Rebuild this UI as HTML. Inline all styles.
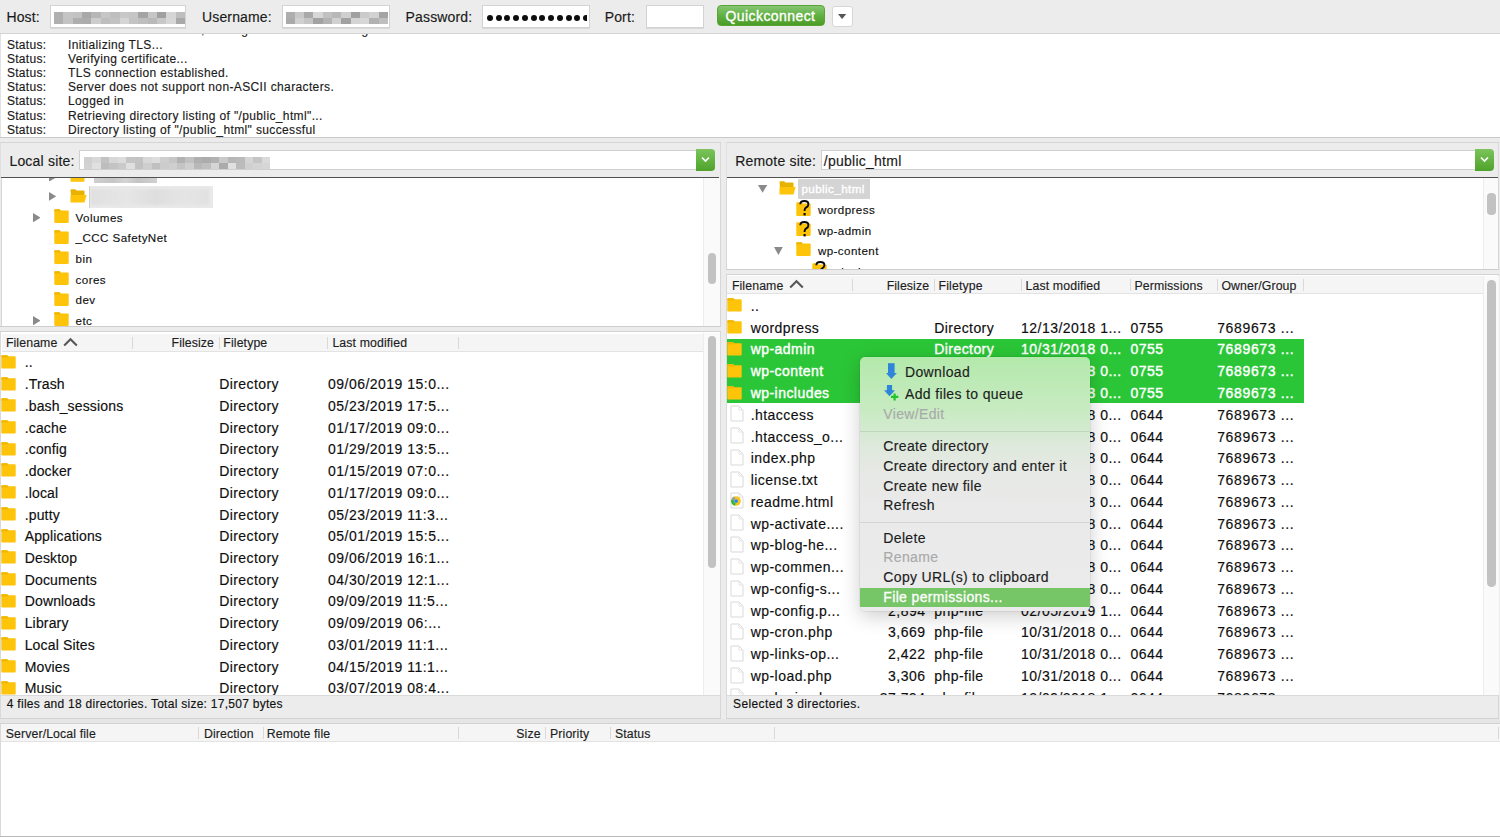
<!DOCTYPE html><html><head><meta charset="utf-8"><style>
*{margin:0;padding:0;box-sizing:border-box}
html,body{width:1500px;height:837px;overflow:hidden;background:#ececec;font-family:"Liberation Sans",sans-serif;position:relative}
.t{position:absolute;white-space:pre;-webkit-text-stroke:0.15px currentColor}
.b{position:absolute}
</style></head><body>
<div class="b" style="left:0.00px;top:0.00px;width:1500.00px;height:33.50px;background:#ececec"></div>
<div class="b" style="left:0.00px;top:33.00px;width:1500.00px;height:1.00px;background:#d4d4d4"></div>
<div class="t " style="left:6.40px;top:9.55px;font-size:14px;line-height:14px;color:#1a1a1a;letter-spacing:0.15px;">Host:</div>
<div class="b" style="left:50.40px;top:4.80px;width:136.00px;height:23.00px;background:#fff;border:1px solid #d3d3d3;box-shadow:0 0.5px 0.5px rgba(0,0,0,0.08)"></div>
<div class="t " style="left:202.00px;top:9.55px;font-size:14px;line-height:14px;color:#1a1a1a;letter-spacing:0.15px;">Username:</div>
<div class="b" style="left:282.40px;top:4.80px;width:108.00px;height:23.00px;background:#fff;border:1px solid #d3d3d3;box-shadow:0 0.5px 0.5px rgba(0,0,0,0.08)"></div>
<div class="t " style="left:405.60px;top:9.55px;font-size:14px;line-height:14px;color:#1a1a1a;letter-spacing:0.15px;">Password:</div>
<div class="b" style="left:481.50px;top:4.80px;width:108.00px;height:23.00px;background:#fff;border:1px solid #d3d3d3;box-shadow:0 0.5px 0.5px rgba(0,0,0,0.08)"></div>
<div class="t " style="left:604.70px;top:9.55px;font-size:14px;line-height:14px;color:#1a1a1a;letter-spacing:0.15px;">Port:</div>
<div class="b" style="left:646.00px;top:4.80px;width:58.00px;height:23.00px;background:#fff;border:1px solid #d3d3d3;box-shadow:0 0.5px 0.5px rgba(0,0,0,0.08)"></div>
<div class="b" style="left:54.00px;top:12.00px;width:9.66px;height:6.30px;background:rgb(175,175,175)"></div>
<div class="b" style="left:63.36px;top:12.00px;width:9.66px;height:6.30px;background:rgb(197,197,197)"></div>
<div class="b" style="left:72.71px;top:12.00px;width:9.66px;height:6.30px;background:rgb(194,194,194)"></div>
<div class="b" style="left:82.07px;top:12.00px;width:9.66px;height:6.30px;background:rgb(168,168,168)"></div>
<div class="b" style="left:91.43px;top:12.00px;width:9.66px;height:6.30px;background:rgb(183,183,183)"></div>
<div class="b" style="left:100.79px;top:12.00px;width:9.66px;height:6.30px;background:rgb(198,198,198)"></div>
<div class="b" style="left:110.14px;top:12.00px;width:9.66px;height:6.30px;background:rgb(190,190,190)"></div>
<div class="b" style="left:119.50px;top:12.00px;width:9.66px;height:6.30px;background:rgb(200,200,200)"></div>
<div class="b" style="left:128.86px;top:12.00px;width:9.66px;height:6.30px;background:rgb(197,197,197)"></div>
<div class="b" style="left:138.21px;top:12.00px;width:9.66px;height:6.30px;background:rgb(164,164,164)"></div>
<div class="b" style="left:147.57px;top:12.00px;width:9.66px;height:6.30px;background:rgb(198,198,198)"></div>
<div class="b" style="left:156.93px;top:12.00px;width:9.66px;height:6.30px;background:rgb(160,160,160)"></div>
<div class="b" style="left:166.29px;top:12.00px;width:9.66px;height:6.30px;background:rgb(213,213,213)"></div>
<div class="b" style="left:175.64px;top:12.00px;width:9.66px;height:6.30px;background:rgb(190,190,190)"></div>
<div class="b" style="left:54.00px;top:18.00px;width:9.66px;height:6.30px;background:rgb(176,176,176)"></div>
<div class="b" style="left:63.36px;top:18.00px;width:9.66px;height:6.30px;background:rgb(195,195,195)"></div>
<div class="b" style="left:72.71px;top:18.00px;width:9.66px;height:6.30px;background:rgb(174,174,174)"></div>
<div class="b" style="left:82.07px;top:18.00px;width:9.66px;height:6.30px;background:rgb(172,172,172)"></div>
<div class="b" style="left:91.43px;top:18.00px;width:9.66px;height:6.30px;background:rgb(205,205,205)"></div>
<div class="b" style="left:100.79px;top:18.00px;width:9.66px;height:6.30px;background:rgb(190,190,190)"></div>
<div class="b" style="left:110.14px;top:18.00px;width:9.66px;height:6.30px;background:rgb(194,194,194)"></div>
<div class="b" style="left:119.50px;top:18.00px;width:9.66px;height:6.30px;background:rgb(213,213,213)"></div>
<div class="b" style="left:128.86px;top:18.00px;width:9.66px;height:6.30px;background:rgb(195,195,195)"></div>
<div class="b" style="left:138.21px;top:18.00px;width:9.66px;height:6.30px;background:rgb(190,190,190)"></div>
<div class="b" style="left:147.57px;top:18.00px;width:9.66px;height:6.30px;background:rgb(185,185,185)"></div>
<div class="b" style="left:156.93px;top:18.00px;width:9.66px;height:6.30px;background:rgb(200,200,200)"></div>
<div class="b" style="left:166.29px;top:18.00px;width:9.66px;height:6.30px;background:rgb(215,215,215)"></div>
<div class="b" style="left:175.64px;top:18.00px;width:9.66px;height:6.30px;background:rgb(169,169,169)"></div>
<div class="b" style="left:285.50px;top:12.00px;width:9.62px;height:6.30px;background:rgb(174,174,174)"></div>
<div class="b" style="left:294.82px;top:12.00px;width:9.62px;height:6.30px;background:rgb(200,200,200)"></div>
<div class="b" style="left:304.14px;top:12.00px;width:9.62px;height:6.30px;background:rgb(169,169,169)"></div>
<div class="b" style="left:313.45px;top:12.00px;width:9.62px;height:6.30px;background:rgb(215,215,215)"></div>
<div class="b" style="left:322.77px;top:12.00px;width:9.62px;height:6.30px;background:rgb(193,193,193)"></div>
<div class="b" style="left:332.09px;top:12.00px;width:9.62px;height:6.30px;background:rgb(184,184,184)"></div>
<div class="b" style="left:341.41px;top:12.00px;width:9.62px;height:6.30px;background:rgb(207,207,207)"></div>
<div class="b" style="left:350.73px;top:12.00px;width:9.62px;height:6.30px;background:rgb(160,160,160)"></div>
<div class="b" style="left:360.05px;top:12.00px;width:9.62px;height:6.30px;background:rgb(202,202,202)"></div>
<div class="b" style="left:369.36px;top:12.00px;width:9.62px;height:6.30px;background:rgb(209,209,209)"></div>
<div class="b" style="left:378.68px;top:12.00px;width:9.62px;height:6.30px;background:rgb(164,164,164)"></div>
<div class="b" style="left:285.50px;top:18.00px;width:9.62px;height:6.30px;background:rgb(170,170,170)"></div>
<div class="b" style="left:294.82px;top:18.00px;width:9.62px;height:6.30px;background:rgb(208,208,208)"></div>
<div class="b" style="left:304.14px;top:18.00px;width:9.62px;height:6.30px;background:rgb(197,197,197)"></div>
<div class="b" style="left:313.45px;top:18.00px;width:9.62px;height:6.30px;background:rgb(162,162,162)"></div>
<div class="b" style="left:322.77px;top:18.00px;width:9.62px;height:6.30px;background:rgb(179,179,179)"></div>
<div class="b" style="left:332.09px;top:18.00px;width:9.62px;height:6.30px;background:rgb(209,209,209)"></div>
<div class="b" style="left:341.41px;top:18.00px;width:9.62px;height:6.30px;background:rgb(161,161,161)"></div>
<div class="b" style="left:350.73px;top:18.00px;width:9.62px;height:6.30px;background:rgb(212,212,212)"></div>
<div class="b" style="left:360.05px;top:18.00px;width:9.62px;height:6.30px;background:rgb(215,215,215)"></div>
<div class="b" style="left:369.36px;top:18.00px;width:9.62px;height:6.30px;background:rgb(177,177,177)"></div>
<div class="b" style="left:378.68px;top:18.00px;width:9.62px;height:6.30px;background:rgb(190,190,190)"></div>
<div class="b" style="left:486.8px;top:14.8px;width:100.6px;height:7px;overflow:hidden;white-space:nowrap;line-height:0"><span style="display:inline-block;width:6px;height:6px;border-radius:50%;background:#0d0d0d;margin-right:2.77px"></span><span style="display:inline-block;width:6px;height:6px;border-radius:50%;background:#0d0d0d;margin-right:2.77px"></span><span style="display:inline-block;width:6px;height:6px;border-radius:50%;background:#0d0d0d;margin-right:2.77px"></span><span style="display:inline-block;width:6px;height:6px;border-radius:50%;background:#0d0d0d;margin-right:2.77px"></span><span style="display:inline-block;width:6px;height:6px;border-radius:50%;background:#0d0d0d;margin-right:2.77px"></span><span style="display:inline-block;width:6px;height:6px;border-radius:50%;background:#0d0d0d;margin-right:2.77px"></span><span style="display:inline-block;width:6px;height:6px;border-radius:50%;background:#0d0d0d;margin-right:2.77px"></span><span style="display:inline-block;width:6px;height:6px;border-radius:50%;background:#0d0d0d;margin-right:2.77px"></span><span style="display:inline-block;width:6px;height:6px;border-radius:50%;background:#0d0d0d;margin-right:2.77px"></span><span style="display:inline-block;width:6px;height:6px;border-radius:50%;background:#0d0d0d;margin-right:2.77px"></span><span style="display:inline-block;width:6px;height:6px;border-radius:50%;background:#0d0d0d;margin-right:2.77px"></span><span style="display:inline-block;width:6px;height:6px;border-radius:50%;background:#0d0d0d;margin-right:2.77px"></span><span style="display:inline-block;width:6px;height:6px;border-radius:50%;background:#0d0d0d;margin-right:2.77px"></span><span style="display:inline-block;width:6px;height:6px;border-radius:50%;background:#0d0d0d;margin-right:2.77px"></span></div>
<div class="b" style="left:716.70px;top:4.80px;width:108.00px;height:21.60px;background:linear-gradient(#86c672,#62b043 50%,#4b9c24);border-radius:4px;border:0.5px solid #58a436"></div>
<div class="t " style="left:725.50px;top:8.75px;font-size:14px;line-height:14px;color:#fff;letter-spacing:0.42px;-webkit-text-stroke:0.35px #fff;">Quickconnect</div>
<div class="b" style="left:832.00px;top:5.80px;width:20.50px;height:21.00px;background:#fff;border:1px solid #d6d6d6;border-radius:3px"></div>
<div class="b" style="left:838.40px;top:14.20px;line-height:0"><svg width="8.20" height="5.00" viewBox="0 0 8.20 5.00" style="display:block"><path d="M0 0 L8.20 0 L4.10 5.00 Z" fill="#555"/></svg></div>
<div class="b" style="left:0.00px;top:34.00px;width:1500.00px;height:103.00px;background:#fff;border-left:1px solid #e2e2e2"></div>
<div class="b" style="left:0.00px;top:136.50px;width:1500.00px;height:1.00px;background:#c9c9c9"></div>
<div class="b" style="left:0;top:34px;width:1500px;height:102.6px;overflow:hidden">
<div class="t" style="left:6.9px;top:-9.66px;font-size:12px;line-height:12px;color:#1a1a1a;letter-spacing:0.3px">Status:</div>
<div class="t" style="left:68px;top:-9.66px;font-size:12px;line-height:12px;color:#1a1a1a;letter-spacing:0.37px">Connection established, waiting for welcome message...</div>
<div class="t" style="left:6.9px;top:4.54px;font-size:12px;line-height:12px;color:#1a1a1a;letter-spacing:0.3px">Status:</div>
<div class="t" style="left:68px;top:4.54px;font-size:12px;line-height:12px;color:#1a1a1a;letter-spacing:0.37px">Initializing TLS...</div>
<div class="t" style="left:6.9px;top:18.74px;font-size:12px;line-height:12px;color:#1a1a1a;letter-spacing:0.3px">Status:</div>
<div class="t" style="left:68px;top:18.74px;font-size:12px;line-height:12px;color:#1a1a1a;letter-spacing:0.37px">Verifying certificate...</div>
<div class="t" style="left:6.9px;top:32.94px;font-size:12px;line-height:12px;color:#1a1a1a;letter-spacing:0.3px">Status:</div>
<div class="t" style="left:68px;top:32.94px;font-size:12px;line-height:12px;color:#1a1a1a;letter-spacing:0.37px">TLS connection established.</div>
<div class="t" style="left:6.9px;top:47.14px;font-size:12px;line-height:12px;color:#1a1a1a;letter-spacing:0.3px">Status:</div>
<div class="t" style="left:68px;top:47.14px;font-size:12px;line-height:12px;color:#1a1a1a;letter-spacing:0.37px">Server does not support non-ASCII characters.</div>
<div class="t" style="left:6.9px;top:61.34px;font-size:12px;line-height:12px;color:#1a1a1a;letter-spacing:0.3px">Status:</div>
<div class="t" style="left:68px;top:61.34px;font-size:12px;line-height:12px;color:#1a1a1a;letter-spacing:0.37px">Logged in</div>
<div class="t" style="left:6.9px;top:75.54px;font-size:12px;line-height:12px;color:#1a1a1a;letter-spacing:0.3px">Status:</div>
<div class="t" style="left:68px;top:75.54px;font-size:12px;line-height:12px;color:#1a1a1a;letter-spacing:0.37px">Retrieving directory listing of &quot;/public_html&quot;...</div>
<div class="t" style="left:6.9px;top:89.74px;font-size:12px;line-height:12px;color:#1a1a1a;letter-spacing:0.3px">Status:</div>
<div class="t" style="left:68px;top:89.74px;font-size:12px;line-height:12px;color:#1a1a1a;letter-spacing:0.37px">Directory listing of &quot;/public_html&quot; successful</div>
</div>
<div class="b" style="left:0.00px;top:141.50px;width:721.00px;height:36.00px;background:#ececec;border-top:1px solid #d5d5d5;border-left:1px solid #e0e0e0;border-right:1px solid #dadada"></div>
<div class="b" style="left:726.00px;top:141.50px;width:773.00px;height:36.00px;background:#ececec;border-top:1px solid #d5d5d5;border-left:1px solid #e0e0e0;border-right:1px solid #dadada"></div>
<div class="b" style="left:1.00px;top:176.90px;width:718.20px;height:1.40px;background:#505050"></div>
<div class="b" style="left:727.30px;top:176.90px;width:771.00px;height:1.40px;background:#505050"></div>
<div class="t " style="left:9.40px;top:154.45px;font-size:14px;line-height:14px;color:#1a1a1a;letter-spacing:0.2px;">Local site:</div>
<div class="b" style="left:79.20px;top:149.60px;width:636.00px;height:20.80px;background:#fff;border:1px solid #d0d0d0"></div>
<div class="b" style="left:84.00px;top:156.50px;width:8.75px;height:6.45px;background:rgb(208,208,208)"></div>
<div class="b" style="left:92.45px;top:156.50px;width:8.75px;height:6.45px;background:rgb(216,216,216)"></div>
<div class="b" style="left:100.91px;top:156.50px;width:8.75px;height:6.45px;background:rgb(194,194,194)"></div>
<div class="b" style="left:109.36px;top:156.50px;width:8.75px;height:6.45px;background:rgb(215,215,215)"></div>
<div class="b" style="left:117.82px;top:156.50px;width:8.75px;height:6.45px;background:rgb(220,220,220)"></div>
<div class="b" style="left:126.27px;top:156.50px;width:8.75px;height:6.45px;background:rgb(197,197,197)"></div>
<div class="b" style="left:134.73px;top:156.50px;width:8.75px;height:6.45px;background:rgb(195,195,195)"></div>
<div class="b" style="left:143.18px;top:156.50px;width:8.75px;height:6.45px;background:rgb(216,216,216)"></div>
<div class="b" style="left:151.64px;top:156.50px;width:8.75px;height:6.45px;background:rgb(221,221,221)"></div>
<div class="b" style="left:160.09px;top:156.50px;width:8.75px;height:6.45px;background:rgb(206,206,206)"></div>
<div class="b" style="left:168.55px;top:156.50px;width:8.75px;height:6.45px;background:rgb(198,198,198)"></div>
<div class="b" style="left:177.00px;top:156.50px;width:8.75px;height:6.45px;background:rgb(178,178,178)"></div>
<div class="b" style="left:185.45px;top:156.50px;width:8.75px;height:6.45px;background:rgb(193,193,193)"></div>
<div class="b" style="left:193.91px;top:156.50px;width:8.75px;height:6.45px;background:rgb(176,176,176)"></div>
<div class="b" style="left:202.36px;top:156.50px;width:8.75px;height:6.45px;background:rgb(172,172,172)"></div>
<div class="b" style="left:210.82px;top:156.50px;width:8.75px;height:6.45px;background:rgb(178,178,178)"></div>
<div class="b" style="left:219.27px;top:156.50px;width:8.75px;height:6.45px;background:rgb(201,201,201)"></div>
<div class="b" style="left:227.73px;top:156.50px;width:8.75px;height:6.45px;background:rgb(183,183,183)"></div>
<div class="b" style="left:236.18px;top:156.50px;width:8.75px;height:6.45px;background:rgb(186,186,186)"></div>
<div class="b" style="left:244.64px;top:156.50px;width:8.75px;height:6.45px;background:rgb(213,213,213)"></div>
<div class="b" style="left:253.09px;top:156.50px;width:8.75px;height:6.45px;background:rgb(197,197,197)"></div>
<div class="b" style="left:261.55px;top:156.50px;width:8.75px;height:6.45px;background:rgb(219,219,219)"></div>
<div class="b" style="left:84.00px;top:162.65px;width:8.75px;height:6.45px;background:rgb(210,210,210)"></div>
<div class="b" style="left:92.45px;top:162.65px;width:8.75px;height:6.45px;background:rgb(224,224,224)"></div>
<div class="b" style="left:100.91px;top:162.65px;width:8.75px;height:6.45px;background:rgb(189,189,189)"></div>
<div class="b" style="left:109.36px;top:162.65px;width:8.75px;height:6.45px;background:rgb(196,196,196)"></div>
<div class="b" style="left:117.82px;top:162.65px;width:8.75px;height:6.45px;background:rgb(202,202,202)"></div>
<div class="b" style="left:126.27px;top:162.65px;width:8.75px;height:6.45px;background:rgb(223,223,223)"></div>
<div class="b" style="left:134.73px;top:162.65px;width:8.75px;height:6.45px;background:rgb(194,194,194)"></div>
<div class="b" style="left:143.18px;top:162.65px;width:8.75px;height:6.45px;background:rgb(206,206,206)"></div>
<div class="b" style="left:151.64px;top:162.65px;width:8.75px;height:6.45px;background:rgb(192,192,192)"></div>
<div class="b" style="left:160.09px;top:162.65px;width:8.75px;height:6.45px;background:rgb(204,204,204)"></div>
<div class="b" style="left:168.55px;top:162.65px;width:8.75px;height:6.45px;background:rgb(207,207,207)"></div>
<div class="b" style="left:177.00px;top:162.65px;width:8.75px;height:6.45px;background:rgb(196,196,196)"></div>
<div class="b" style="left:185.45px;top:162.65px;width:8.75px;height:6.45px;background:rgb(207,207,207)"></div>
<div class="b" style="left:193.91px;top:162.65px;width:8.75px;height:6.45px;background:rgb(184,184,184)"></div>
<div class="b" style="left:202.36px;top:162.65px;width:8.75px;height:6.45px;background:rgb(191,191,191)"></div>
<div class="b" style="left:210.82px;top:162.65px;width:8.75px;height:6.45px;background:rgb(213,213,213)"></div>
<div class="b" style="left:219.27px;top:162.65px;width:8.75px;height:6.45px;background:rgb(171,171,171)"></div>
<div class="b" style="left:227.73px;top:162.65px;width:8.75px;height:6.45px;background:rgb(224,224,224)"></div>
<div class="b" style="left:236.18px;top:162.65px;width:8.75px;height:6.45px;background:rgb(187,187,187)"></div>
<div class="b" style="left:244.64px;top:162.65px;width:8.75px;height:6.45px;background:rgb(208,208,208)"></div>
<div class="b" style="left:253.09px;top:162.65px;width:8.75px;height:6.45px;background:rgb(212,212,212)"></div>
<div class="b" style="left:261.55px;top:162.65px;width:8.75px;height:6.45px;background:rgb(214,214,214)"></div>
<div class="b" style="left:695.80px;top:149.00px;width:19.00px;height:21.80px;background:linear-gradient(#7bc45b,#4ea32a);border-radius:0 4px 4px 0"></div>
<div class="b" style="left:700.8px;top:155.5px;line-height:0"><svg width="9" height="7" viewBox="0 0 9 7"><path d="M1 1.5 L4.5 5 L8 1.5" fill="none" stroke="#fff" stroke-width="1.7"/></svg></div>
<div class="t " style="left:735.20px;top:154.45px;font-size:14px;line-height:14px;color:#1a1a1a;letter-spacing:0.2px;">Remote site:</div>
<div class="b" style="left:820.50px;top:149.60px;width:655.00px;height:20.80px;background:#fff;border:1px solid #d0d0d0"></div>
<div class="t " style="left:823.80px;top:153.95px;font-size:14px;line-height:14px;color:#1a1a1a;letter-spacing:0.25px;">/public_html</div>
<div class="b" style="left:1474.80px;top:149.00px;width:19.00px;height:21.80px;background:linear-gradient(#7bc45b,#4ea32a);border-radius:0 4px 4px 0"></div>
<div class="b" style="left:1479.8px;top:155.5px;line-height:0"><svg width="9" height="7" viewBox="0 0 9 7"><path d="M1 1.5 L4.5 5 L8 1.5" fill="none" stroke="#fff" stroke-width="1.7"/></svg></div>
<div class="b" style="left:0.50px;top:178.30px;width:720.00px;height:148.00px;background:#fff;border-left:1px solid #d6d6d6;border-right:1px solid #d6d6d6"></div>
<div class="b" style="left:703.30px;top:178.30px;width:17.00px;height:148.00px;background:#fafafa;border-left:1px solid #ececec"></div>
<div class="b" style="left:707.70px;top:253.00px;width:8.50px;height:30.50px;background:#c2c2c2;border-radius:4px"></div>
<div class="b" style="left:0.00px;top:326.00px;width:721.00px;height:1.00px;background:#cdcdcd"></div>
<div class="b" style="left:0;top:178.3px;width:703px;height:147.7px;overflow:hidden">
<div class="b" style="left:70.00px;top:-9.80px;line-height:0"><svg width="15" height="13" viewBox="0 0 15 13"><path d="M0.5 1.2 Q0.5 0.3 1.4 0.3 L5.2 0.3 L6.4 1.6 L13.6 1.6 Q14.5 1.6 14.5 2.5 L14.5 12 Q14.5 12.8 13.6 12.8 L1.4 12.8 Q0.5 12.8 0.5 12 Z" fill="#fec40a"/><path d="M0.5 2.6 L14.5 2.6" stroke="#e9b000" stroke-width="0.8"/></svg></div>
<div class="b" style="left:49.00px;top:-5.80px;line-height:0"><svg width="7.30" height="8.70" viewBox="0 0 7.30 8.70" style="display:block"><path d="M0 0 L7.30 4.35 L0 8.70 Z" fill="#8a8a8a"/></svg></div>
<div class="b" style="left:94.00px;top:-0.70px;width:63.00px;height:5.20px;background:linear-gradient(90deg,#cfcfcf,#c6c6c6 30%,#d4d4d4 50%,#c4c4c4 70%,#d0d0d0);filter:blur(0.6px)"></div>
<div class="b" style="left:49.00px;top:13.70px;line-height:0"><svg width="7.30" height="8.70" viewBox="0 0 7.30 8.70" style="display:block"><path d="M0 0 L7.30 4.35 L0 8.70 Z" fill="#8a8a8a"/></svg></div>
<div class="b" style="left:70.00px;top:10.40px;line-height:0"><svg width="17" height="14" viewBox="0 0 17 14"><path d="M0.5 1.2 Q0.5 0.3 1.4 0.3 L5.2 0.3 L6.4 1.6 L13.6 1.6 Q14.5 1.6 14.5 2.5 L14.5 6 L1 6 Z" fill="#e8b300"/><path d="M2.2 6 L16.6 6 L14.5 13.6 L0.5 13.6 L0.5 6 Z" fill="#fec40a"/></svg></div>
<div class="b" style="left:88.70px;top:7.70px;width:124.00px;height:22.00px;background:#e9e9e9"></div>
<div class="b" style="left:88.70px;top:7.70px;width:1.00px;height:22.00px;background:#cfcfcf"></div>
<div class="b" style="left:91.00px;top:10.70px;width:118.00px;height:16.00px;background:linear-gradient(90deg,#e0e0e0,#e6e6e6 30%,#dedede 55%,#e5e5e5 80%,#e1e1e1);filter:blur(1.2px)"></div>
<div class="b" style="left:32.70px;top:34.40px;line-height:0"><svg width="7.60" height="9.30" viewBox="0 0 7.60 9.30" style="display:block"><path d="M0 0 L7.60 4.65 L0 9.30 Z" fill="#8a8a8a"/></svg></div>
<div class="b" style="left:53.50px;top:30.60px;line-height:0"><svg width="15" height="14" viewBox="0 0 15 14"><path d="M0.3 1.0 Q0.3 0.2 1.1 0.2 L5.6 0.2 L6.6 1.4 L13.9 1.4 Q14.7 1.4 14.7 2.2 L14.7 13.1 Q14.7 13.9 13.9 13.9 L1.1 13.9 Q0.3 13.9 0.3 13.1 Z" fill="#fec40a"/><path d="M0.3 1.0 Q0.3 0.2 1.1 0.2 L5.6 0.2 L6.6 1.4 L6.6 2.6 L0.3 2.6 Z" fill="#efb600"/></svg></div>
<div class="t " style="left:75.60px;top:33.38px;font-size:11.6px;line-height:11.6px;color:#111;letter-spacing:0.42px;">Volumes</div>
<div class="b" style="left:53.50px;top:51.30px;line-height:0"><svg width="15" height="14" viewBox="0 0 15 14"><path d="M0.3 1.0 Q0.3 0.2 1.1 0.2 L5.6 0.2 L6.6 1.4 L13.9 1.4 Q14.7 1.4 14.7 2.2 L14.7 13.1 Q14.7 13.9 13.9 13.9 L1.1 13.9 Q0.3 13.9 0.3 13.1 Z" fill="#fec40a"/><path d="M0.3 1.0 Q0.3 0.2 1.1 0.2 L5.6 0.2 L6.6 1.4 L6.6 2.6 L0.3 2.6 Z" fill="#efb600"/></svg></div>
<div class="t " style="left:75.60px;top:54.08px;font-size:11.6px;line-height:11.6px;color:#111;letter-spacing:0.42px;">_CCC SafetyNet</div>
<div class="b" style="left:53.50px;top:72.00px;line-height:0"><svg width="15" height="14" viewBox="0 0 15 14"><path d="M0.3 1.0 Q0.3 0.2 1.1 0.2 L5.6 0.2 L6.6 1.4 L13.9 1.4 Q14.7 1.4 14.7 2.2 L14.7 13.1 Q14.7 13.9 13.9 13.9 L1.1 13.9 Q0.3 13.9 0.3 13.1 Z" fill="#fec40a"/><path d="M0.3 1.0 Q0.3 0.2 1.1 0.2 L5.6 0.2 L6.6 1.4 L6.6 2.6 L0.3 2.6 Z" fill="#efb600"/></svg></div>
<div class="t " style="left:75.60px;top:74.78px;font-size:11.6px;line-height:11.6px;color:#111;letter-spacing:0.42px;">bin</div>
<div class="b" style="left:53.50px;top:92.60px;line-height:0"><svg width="15" height="14" viewBox="0 0 15 14"><path d="M0.3 1.0 Q0.3 0.2 1.1 0.2 L5.6 0.2 L6.6 1.4 L13.9 1.4 Q14.7 1.4 14.7 2.2 L14.7 13.1 Q14.7 13.9 13.9 13.9 L1.1 13.9 Q0.3 13.9 0.3 13.1 Z" fill="#fec40a"/><path d="M0.3 1.0 Q0.3 0.2 1.1 0.2 L5.6 0.2 L6.6 1.4 L6.6 2.6 L0.3 2.6 Z" fill="#efb600"/></svg></div>
<div class="t " style="left:75.60px;top:95.38px;font-size:11.6px;line-height:11.6px;color:#111;letter-spacing:0.42px;">cores</div>
<div class="b" style="left:53.50px;top:113.30px;line-height:0"><svg width="15" height="14" viewBox="0 0 15 14"><path d="M0.3 1.0 Q0.3 0.2 1.1 0.2 L5.6 0.2 L6.6 1.4 L13.9 1.4 Q14.7 1.4 14.7 2.2 L14.7 13.1 Q14.7 13.9 13.9 13.9 L1.1 13.9 Q0.3 13.9 0.3 13.1 Z" fill="#fec40a"/><path d="M0.3 1.0 Q0.3 0.2 1.1 0.2 L5.6 0.2 L6.6 1.4 L6.6 2.6 L0.3 2.6 Z" fill="#efb600"/></svg></div>
<div class="t " style="left:75.60px;top:116.08px;font-size:11.6px;line-height:11.6px;color:#111;letter-spacing:0.42px;">dev</div>
<div class="b" style="left:32.70px;top:137.70px;line-height:0"><svg width="7.60" height="9.30" viewBox="0 0 7.60 9.30" style="display:block"><path d="M0 0 L7.60 4.65 L0 9.30 Z" fill="#8a8a8a"/></svg></div>
<div class="b" style="left:53.50px;top:133.90px;line-height:0"><svg width="15" height="14" viewBox="0 0 15 14"><path d="M0.3 1.0 Q0.3 0.2 1.1 0.2 L5.6 0.2 L6.6 1.4 L13.9 1.4 Q14.7 1.4 14.7 2.2 L14.7 13.1 Q14.7 13.9 13.9 13.9 L1.1 13.9 Q0.3 13.9 0.3 13.1 Z" fill="#fec40a"/><path d="M0.3 1.0 Q0.3 0.2 1.1 0.2 L5.6 0.2 L6.6 1.4 L6.6 2.6 L0.3 2.6 Z" fill="#efb600"/></svg></div>
<div class="t " style="left:75.60px;top:136.68px;font-size:11.6px;line-height:11.6px;color:#111;letter-spacing:0.42px;">etc</div>
</div>
<div class="b" style="left:726.00px;top:178.30px;width:773.00px;height:90.90px;background:#fff;border-left:1px solid #d6d6d6;border-right:1px solid #d6d6d6"></div>
<div class="b" style="left:1483.40px;top:178.30px;width:15.00px;height:90.90px;background:#fafafa;border-left:1px solid #ececec"></div>
<div class="b" style="left:1487.00px;top:193.30px;width:8.70px;height:21.30px;background:#c2c2c2;border-radius:4px"></div>
<div class="b" style="left:726.00px;top:269.00px;width:773.00px;height:1.00px;background:#cdcdcd"></div>
<div class="b" style="left:726px;top:178.3px;width:757px;height:90.7px;overflow:hidden">
<div class="b" style="left:32.00px;top:6.70px;line-height:0"><svg width="9.20" height="7.70" viewBox="0 0 9.20 7.70" style="display:block"><path d="M0 0 L9.20 0 L4.60 7.70 Z" fill="#8a8a8a"/></svg></div>
<div class="b" style="left:53.40px;top:2.70px;line-height:0"><svg width="17" height="14" viewBox="0 0 17 14"><path d="M0.5 1.2 Q0.5 0.3 1.4 0.3 L5.2 0.3 L6.4 1.6 L13.6 1.6 Q14.5 1.6 14.5 2.5 L14.5 6 L1 6 Z" fill="#e8b300"/><path d="M2.2 6 L16.6 6 L14.5 13.6 L0.5 13.6 L0.5 6 Z" fill="#fec40a"/></svg></div>
<div class="b" style="left:72.20px;top:0.70px;width:71.40px;height:19.70px;background:#d4d4d4"></div>
<div class="t " style="left:75.50px;top:5.18px;font-size:11.6px;line-height:11.6px;color:#fff;letter-spacing:0.42px;-webkit-text-stroke:0.35px #fff;">public_html</div>
<div class="b" style="left:69.90px;top:23.40px;line-height:0"><svg width="15" height="14" viewBox="0 0 15 14"><path d="M0.3 1.0 Q0.3 0.2 1.1 0.2 L5.6 0.2 L6.6 1.4 L13.9 1.4 Q14.7 1.4 14.7 2.2 L14.7 13.1 Q14.7 13.9 13.9 13.9 L1.1 13.9 Q0.3 13.9 0.3 13.1 Z" fill="#fec40a"/></svg></div>
<div class="b" style="left:73.00px;top:22.00px;line-height:0"><svg width="11" height="16" viewBox="0 0 11 16"><path d="M1.3 4.3 Q1.3 1 5.3 1 Q9.4 1 9.4 4.2 Q9.4 6.2 7.3 7.3 Q5.6 8.2 5.6 10.2 L5.6 11" fill="none" stroke="#0a0a0a" stroke-width="1.9"/><rect x="4.5" y="13" width="2.2" height="2.4" fill="#0a0a0a"/></svg></div>
<div class="t " style="left:91.90px;top:25.88px;font-size:11.6px;line-height:11.6px;color:#111;letter-spacing:0.42px;">wordpress</div>
<div class="b" style="left:69.90px;top:43.90px;line-height:0"><svg width="15" height="14" viewBox="0 0 15 14"><path d="M0.3 1.0 Q0.3 0.2 1.1 0.2 L5.6 0.2 L6.6 1.4 L13.9 1.4 Q14.7 1.4 14.7 2.2 L14.7 13.1 Q14.7 13.9 13.9 13.9 L1.1 13.9 Q0.3 13.9 0.3 13.1 Z" fill="#fec40a"/></svg></div>
<div class="b" style="left:73.00px;top:42.50px;line-height:0"><svg width="11" height="16" viewBox="0 0 11 16"><path d="M1.3 4.3 Q1.3 1 5.3 1 Q9.4 1 9.4 4.2 Q9.4 6.2 7.3 7.3 Q5.6 8.2 5.6 10.2 L5.6 11" fill="none" stroke="#0a0a0a" stroke-width="1.9"/><rect x="4.5" y="13" width="2.2" height="2.4" fill="#0a0a0a"/></svg></div>
<div class="t " style="left:91.90px;top:46.38px;font-size:11.6px;line-height:11.6px;color:#111;letter-spacing:0.42px;">wp-admin</div>
<div class="b" style="left:48.40px;top:68.70px;line-height:0"><svg width="8.80" height="7.90" viewBox="0 0 8.80 7.90" style="display:block"><path d="M0 0 L8.80 0 L4.40 7.90 Z" fill="#8a8a8a"/></svg></div>
<div class="b" style="left:70.00px;top:64.00px;line-height:0"><svg width="15" height="14" viewBox="0 0 15 14"><path d="M0.3 1.0 Q0.3 0.2 1.1 0.2 L5.6 0.2 L6.6 1.4 L13.9 1.4 Q14.7 1.4 14.7 2.2 L14.7 13.1 Q14.7 13.9 13.9 13.9 L1.1 13.9 Q0.3 13.9 0.3 13.1 Z" fill="#fec40a"/><path d="M0.3 1.0 Q0.3 0.2 1.1 0.2 L5.6 0.2 L6.6 1.4 L6.6 2.6 L0.3 2.6 Z" fill="#efb600"/></svg></div>
<div class="t " style="left:91.90px;top:66.78px;font-size:11.6px;line-height:11.6px;color:#111;letter-spacing:0.42px;">wp-content</div>
<div class="b" style="left:86.30px;top:84.40px;line-height:0"><svg width="15" height="14" viewBox="0 0 15 14"><path d="M0.3 1.0 Q0.3 0.2 1.1 0.2 L5.6 0.2 L6.6 1.4 L13.9 1.4 Q14.7 1.4 14.7 2.2 L14.7 13.1 Q14.7 13.9 13.9 13.9 L1.1 13.9 Q0.3 13.9 0.3 13.1 Z" fill="#fec40a"/></svg></div>
<div class="b" style="left:89.40px;top:83.00px;line-height:0"><svg width="11" height="16" viewBox="0 0 11 16"><path d="M1.3 4.3 Q1.3 1 5.3 1 Q9.4 1 9.4 4.2 Q9.4 6.2 7.3 7.3 Q5.6 8.2 5.6 10.2 L5.6 11" fill="none" stroke="#0a0a0a" stroke-width="1.9"/><rect x="4.5" y="13" width="2.2" height="2.4" fill="#0a0a0a"/></svg></div>
<div class="t " style="left:108.30px;top:87.48px;font-size:11.6px;line-height:11.6px;color:#111;letter-spacing:0.42px;">plugins</div>
</div>
<div class="b" style="left:0.00px;top:331.00px;width:721.00px;height:1.00px;background:#d3d3d3"></div>
<div class="b" style="left:0.00px;top:332.00px;width:721.00px;height:363.50px;background:#fff;border-left:1px solid #d9d9d9;border-right:1px solid #d9d9d9"></div>
<div class="b" style="left:1.50px;top:333.60px;width:701.80px;height:18.00px;background:#f5f5f5;border-bottom:1px solid #e3e3e3"></div>
<div class="t " style="left:5.90px;top:337.19px;font-size:12.3px;line-height:12.3px;color:#1e1e1e;letter-spacing:0.12px;">Filename</div>
<div class="b" style="left:131.60px;top:336.60px;width:1.00px;height:12.00px;background:#d9d9d9"></div>
<div class="t" style="right:1286.00px;top:337.19px;font-size:12.3px;line-height:12.3px;color:#1e1e1e;letter-spacing:0.1px;">Filesize</div>
<div class="b" style="left:218.50px;top:336.60px;width:1.00px;height:12.00px;background:#d9d9d9"></div>
<div class="t " style="left:223.30px;top:337.19px;font-size:12.3px;line-height:12.3px;color:#1e1e1e;letter-spacing:0.12px;">Filetype</div>
<div class="b" style="left:327.30px;top:336.60px;width:1.00px;height:12.00px;background:#d9d9d9"></div>
<div class="t " style="left:332.40px;top:337.19px;font-size:12.3px;line-height:12.3px;color:#1e1e1e;letter-spacing:0.12px;">Last modified</div>
<div class="b" style="left:458.20px;top:336.60px;width:1.00px;height:12.00px;background:#d9d9d9"></div>
<div class="b" style="left:62.50px;top:336.60px;line-height:0"><svg width="15" height="10" viewBox="0 0 15 10"><path d="M1.2 8.6 L7.5 2.2 L13.8 8.6" fill="none" stroke="#585858" stroke-width="2.1"/></svg></div>
<div class="b" style="left:703.30px;top:332.50px;width:17.00px;height:363.00px;background:#fafafa;border-left:1px solid #ededed"></div>
<div class="b" style="left:707.70px;top:336.10px;width:8.50px;height:231.50px;background:#c2c2c2;border-radius:4.25px"></div>
<div class="b" style="left:1px;top:352.2px;width:702.3px;height:343.00px;overflow:hidden">
<div class="b" style="left:0.30px;top:2.60px;line-height:0"><svg width="15" height="14" viewBox="0 0 15 14"><path d="M0.3 0.9 Q0.3 0.2 1.0 0.2 L6.2 0.2 L7.2 1.3 L14.0 1.3 Q14.7 1.3 14.7 2.0 L14.7 12.7 Q14.7 13.4 14.0 13.4 L1.0 13.4 Q0.3 13.4 0.3 12.7 Z" fill="#fec40a"/><path d="M0.3 0.9 Q0.3 0.2 1.0 0.2 L6.2 0.2 L7.2 1.3 L7.2 2.4 L0.3 2.4 Z" fill="#f0b800"/></svg></div>
<div class="t " style="left:23.70px;top:3.25px;font-size:14px;line-height:14px;color:#0e0e0e;letter-spacing:0.15px;">..</div>
<div class="b" style="left:0.30px;top:24.33px;line-height:0"><svg width="15" height="14" viewBox="0 0 15 14"><path d="M0.3 0.9 Q0.3 0.2 1.0 0.2 L6.2 0.2 L7.2 1.3 L14.0 1.3 Q14.7 1.3 14.7 2.0 L14.7 12.7 Q14.7 13.4 14.0 13.4 L1.0 13.4 Q0.3 13.4 0.3 12.7 Z" fill="#fec40a"/><path d="M0.3 0.9 Q0.3 0.2 1.0 0.2 L6.2 0.2 L7.2 1.3 L7.2 2.4 L0.3 2.4 Z" fill="#f0b800"/></svg></div>
<div class="t " style="left:23.70px;top:24.98px;font-size:14px;line-height:14px;color:#0e0e0e;letter-spacing:0.15px;">.Trash</div>
<div class="t " style="left:218.20px;top:24.98px;font-size:14px;line-height:14px;color:#0e0e0e;letter-spacing:0.42px;">Directory</div>
<div class="t " style="left:327.00px;top:24.98px;font-size:14px;line-height:14px;color:#0e0e0e;letter-spacing:0.48px;">09/06/2019 15:0...</div>
<div class="b" style="left:0.30px;top:46.06px;line-height:0"><svg width="15" height="14" viewBox="0 0 15 14"><path d="M0.3 0.9 Q0.3 0.2 1.0 0.2 L6.2 0.2 L7.2 1.3 L14.0 1.3 Q14.7 1.3 14.7 2.0 L14.7 12.7 Q14.7 13.4 14.0 13.4 L1.0 13.4 Q0.3 13.4 0.3 12.7 Z" fill="#fec40a"/><path d="M0.3 0.9 Q0.3 0.2 1.0 0.2 L6.2 0.2 L7.2 1.3 L7.2 2.4 L0.3 2.4 Z" fill="#f0b800"/></svg></div>
<div class="t " style="left:23.70px;top:46.71px;font-size:14px;line-height:14px;color:#0e0e0e;letter-spacing:0.15px;">.bash_sessions</div>
<div class="t " style="left:218.20px;top:46.71px;font-size:14px;line-height:14px;color:#0e0e0e;letter-spacing:0.42px;">Directory</div>
<div class="t " style="left:327.00px;top:46.71px;font-size:14px;line-height:14px;color:#0e0e0e;letter-spacing:0.48px;">05/23/2019 17:5...</div>
<div class="b" style="left:0.30px;top:67.79px;line-height:0"><svg width="15" height="14" viewBox="0 0 15 14"><path d="M0.3 0.9 Q0.3 0.2 1.0 0.2 L6.2 0.2 L7.2 1.3 L14.0 1.3 Q14.7 1.3 14.7 2.0 L14.7 12.7 Q14.7 13.4 14.0 13.4 L1.0 13.4 Q0.3 13.4 0.3 12.7 Z" fill="#fec40a"/><path d="M0.3 0.9 Q0.3 0.2 1.0 0.2 L6.2 0.2 L7.2 1.3 L7.2 2.4 L0.3 2.4 Z" fill="#f0b800"/></svg></div>
<div class="t " style="left:23.70px;top:68.44px;font-size:14px;line-height:14px;color:#0e0e0e;letter-spacing:0.15px;">.cache</div>
<div class="t " style="left:218.20px;top:68.44px;font-size:14px;line-height:14px;color:#0e0e0e;letter-spacing:0.42px;">Directory</div>
<div class="t " style="left:327.00px;top:68.44px;font-size:14px;line-height:14px;color:#0e0e0e;letter-spacing:0.48px;">01/17/2019 09:0...</div>
<div class="b" style="left:0.30px;top:89.52px;line-height:0"><svg width="15" height="14" viewBox="0 0 15 14"><path d="M0.3 0.9 Q0.3 0.2 1.0 0.2 L6.2 0.2 L7.2 1.3 L14.0 1.3 Q14.7 1.3 14.7 2.0 L14.7 12.7 Q14.7 13.4 14.0 13.4 L1.0 13.4 Q0.3 13.4 0.3 12.7 Z" fill="#fec40a"/><path d="M0.3 0.9 Q0.3 0.2 1.0 0.2 L6.2 0.2 L7.2 1.3 L7.2 2.4 L0.3 2.4 Z" fill="#f0b800"/></svg></div>
<div class="t " style="left:23.70px;top:90.17px;font-size:14px;line-height:14px;color:#0e0e0e;letter-spacing:0.15px;">.config</div>
<div class="t " style="left:218.20px;top:90.17px;font-size:14px;line-height:14px;color:#0e0e0e;letter-spacing:0.42px;">Directory</div>
<div class="t " style="left:327.00px;top:90.17px;font-size:14px;line-height:14px;color:#0e0e0e;letter-spacing:0.48px;">01/29/2019 13:5...</div>
<div class="b" style="left:0.30px;top:111.25px;line-height:0"><svg width="15" height="14" viewBox="0 0 15 14"><path d="M0.3 0.9 Q0.3 0.2 1.0 0.2 L6.2 0.2 L7.2 1.3 L14.0 1.3 Q14.7 1.3 14.7 2.0 L14.7 12.7 Q14.7 13.4 14.0 13.4 L1.0 13.4 Q0.3 13.4 0.3 12.7 Z" fill="#fec40a"/><path d="M0.3 0.9 Q0.3 0.2 1.0 0.2 L6.2 0.2 L7.2 1.3 L7.2 2.4 L0.3 2.4 Z" fill="#f0b800"/></svg></div>
<div class="t " style="left:23.70px;top:111.90px;font-size:14px;line-height:14px;color:#0e0e0e;letter-spacing:0.15px;">.docker</div>
<div class="t " style="left:218.20px;top:111.90px;font-size:14px;line-height:14px;color:#0e0e0e;letter-spacing:0.42px;">Directory</div>
<div class="t " style="left:327.00px;top:111.90px;font-size:14px;line-height:14px;color:#0e0e0e;letter-spacing:0.48px;">01/15/2019 07:0...</div>
<div class="b" style="left:0.30px;top:132.98px;line-height:0"><svg width="15" height="14" viewBox="0 0 15 14"><path d="M0.3 0.9 Q0.3 0.2 1.0 0.2 L6.2 0.2 L7.2 1.3 L14.0 1.3 Q14.7 1.3 14.7 2.0 L14.7 12.7 Q14.7 13.4 14.0 13.4 L1.0 13.4 Q0.3 13.4 0.3 12.7 Z" fill="#fec40a"/><path d="M0.3 0.9 Q0.3 0.2 1.0 0.2 L6.2 0.2 L7.2 1.3 L7.2 2.4 L0.3 2.4 Z" fill="#f0b800"/></svg></div>
<div class="t " style="left:23.70px;top:133.63px;font-size:14px;line-height:14px;color:#0e0e0e;letter-spacing:0.15px;">.local</div>
<div class="t " style="left:218.20px;top:133.63px;font-size:14px;line-height:14px;color:#0e0e0e;letter-spacing:0.42px;">Directory</div>
<div class="t " style="left:327.00px;top:133.63px;font-size:14px;line-height:14px;color:#0e0e0e;letter-spacing:0.48px;">01/17/2019 09:0...</div>
<div class="b" style="left:0.30px;top:154.71px;line-height:0"><svg width="15" height="14" viewBox="0 0 15 14"><path d="M0.3 0.9 Q0.3 0.2 1.0 0.2 L6.2 0.2 L7.2 1.3 L14.0 1.3 Q14.7 1.3 14.7 2.0 L14.7 12.7 Q14.7 13.4 14.0 13.4 L1.0 13.4 Q0.3 13.4 0.3 12.7 Z" fill="#fec40a"/><path d="M0.3 0.9 Q0.3 0.2 1.0 0.2 L6.2 0.2 L7.2 1.3 L7.2 2.4 L0.3 2.4 Z" fill="#f0b800"/></svg></div>
<div class="t " style="left:23.70px;top:155.36px;font-size:14px;line-height:14px;color:#0e0e0e;letter-spacing:0.15px;">.putty</div>
<div class="t " style="left:218.20px;top:155.36px;font-size:14px;line-height:14px;color:#0e0e0e;letter-spacing:0.42px;">Directory</div>
<div class="t " style="left:327.00px;top:155.36px;font-size:14px;line-height:14px;color:#0e0e0e;letter-spacing:0.48px;">05/23/2019 11:3...</div>
<div class="b" style="left:0.30px;top:176.44px;line-height:0"><svg width="15" height="14" viewBox="0 0 15 14"><path d="M0.3 0.9 Q0.3 0.2 1.0 0.2 L6.2 0.2 L7.2 1.3 L14.0 1.3 Q14.7 1.3 14.7 2.0 L14.7 12.7 Q14.7 13.4 14.0 13.4 L1.0 13.4 Q0.3 13.4 0.3 12.7 Z" fill="#fec40a"/><path d="M0.3 0.9 Q0.3 0.2 1.0 0.2 L6.2 0.2 L7.2 1.3 L7.2 2.4 L0.3 2.4 Z" fill="#f0b800"/></svg></div>
<div class="t " style="left:23.70px;top:177.09px;font-size:14px;line-height:14px;color:#0e0e0e;letter-spacing:0.15px;">Applications</div>
<div class="t " style="left:218.20px;top:177.09px;font-size:14px;line-height:14px;color:#0e0e0e;letter-spacing:0.42px;">Directory</div>
<div class="t " style="left:327.00px;top:177.09px;font-size:14px;line-height:14px;color:#0e0e0e;letter-spacing:0.48px;">05/01/2019 15:5...</div>
<div class="b" style="left:0.30px;top:198.17px;line-height:0"><svg width="15" height="14" viewBox="0 0 15 14"><path d="M0.3 0.9 Q0.3 0.2 1.0 0.2 L6.2 0.2 L7.2 1.3 L14.0 1.3 Q14.7 1.3 14.7 2.0 L14.7 12.7 Q14.7 13.4 14.0 13.4 L1.0 13.4 Q0.3 13.4 0.3 12.7 Z" fill="#fec40a"/><path d="M0.3 0.9 Q0.3 0.2 1.0 0.2 L6.2 0.2 L7.2 1.3 L7.2 2.4 L0.3 2.4 Z" fill="#f0b800"/></svg></div>
<div class="t " style="left:23.70px;top:198.82px;font-size:14px;line-height:14px;color:#0e0e0e;letter-spacing:0.15px;">Desktop</div>
<div class="t " style="left:218.20px;top:198.82px;font-size:14px;line-height:14px;color:#0e0e0e;letter-spacing:0.42px;">Directory</div>
<div class="t " style="left:327.00px;top:198.82px;font-size:14px;line-height:14px;color:#0e0e0e;letter-spacing:0.48px;">09/06/2019 16:1...</div>
<div class="b" style="left:0.30px;top:219.90px;line-height:0"><svg width="15" height="14" viewBox="0 0 15 14"><path d="M0.3 0.9 Q0.3 0.2 1.0 0.2 L6.2 0.2 L7.2 1.3 L14.0 1.3 Q14.7 1.3 14.7 2.0 L14.7 12.7 Q14.7 13.4 14.0 13.4 L1.0 13.4 Q0.3 13.4 0.3 12.7 Z" fill="#fec40a"/><path d="M0.3 0.9 Q0.3 0.2 1.0 0.2 L6.2 0.2 L7.2 1.3 L7.2 2.4 L0.3 2.4 Z" fill="#f0b800"/></svg></div>
<div class="t " style="left:23.70px;top:220.55px;font-size:14px;line-height:14px;color:#0e0e0e;letter-spacing:0.15px;">Documents</div>
<div class="t " style="left:218.20px;top:220.55px;font-size:14px;line-height:14px;color:#0e0e0e;letter-spacing:0.42px;">Directory</div>
<div class="t " style="left:327.00px;top:220.55px;font-size:14px;line-height:14px;color:#0e0e0e;letter-spacing:0.48px;">04/30/2019 12:1...</div>
<div class="b" style="left:0.30px;top:241.63px;line-height:0"><svg width="15" height="14" viewBox="0 0 15 14"><path d="M0.3 0.9 Q0.3 0.2 1.0 0.2 L6.2 0.2 L7.2 1.3 L14.0 1.3 Q14.7 1.3 14.7 2.0 L14.7 12.7 Q14.7 13.4 14.0 13.4 L1.0 13.4 Q0.3 13.4 0.3 12.7 Z" fill="#fec40a"/><path d="M0.3 0.9 Q0.3 0.2 1.0 0.2 L6.2 0.2 L7.2 1.3 L7.2 2.4 L0.3 2.4 Z" fill="#f0b800"/></svg></div>
<div class="t " style="left:23.70px;top:242.28px;font-size:14px;line-height:14px;color:#0e0e0e;letter-spacing:0.15px;">Downloads</div>
<div class="t " style="left:218.20px;top:242.28px;font-size:14px;line-height:14px;color:#0e0e0e;letter-spacing:0.42px;">Directory</div>
<div class="t " style="left:327.00px;top:242.28px;font-size:14px;line-height:14px;color:#0e0e0e;letter-spacing:0.48px;">09/09/2019 11:5...</div>
<div class="b" style="left:0.30px;top:263.36px;line-height:0"><svg width="15" height="14" viewBox="0 0 15 14"><path d="M0.3 0.9 Q0.3 0.2 1.0 0.2 L6.2 0.2 L7.2 1.3 L14.0 1.3 Q14.7 1.3 14.7 2.0 L14.7 12.7 Q14.7 13.4 14.0 13.4 L1.0 13.4 Q0.3 13.4 0.3 12.7 Z" fill="#fec40a"/><path d="M0.3 0.9 Q0.3 0.2 1.0 0.2 L6.2 0.2 L7.2 1.3 L7.2 2.4 L0.3 2.4 Z" fill="#f0b800"/></svg></div>
<div class="t " style="left:23.70px;top:264.01px;font-size:14px;line-height:14px;color:#0e0e0e;letter-spacing:0.15px;">Library</div>
<div class="t " style="left:218.20px;top:264.01px;font-size:14px;line-height:14px;color:#0e0e0e;letter-spacing:0.42px;">Directory</div>
<div class="t " style="left:327.00px;top:264.01px;font-size:14px;line-height:14px;color:#0e0e0e;letter-spacing:0.48px;">09/09/2019 06:...</div>
<div class="b" style="left:0.30px;top:285.09px;line-height:0"><svg width="15" height="14" viewBox="0 0 15 14"><path d="M0.3 0.9 Q0.3 0.2 1.0 0.2 L6.2 0.2 L7.2 1.3 L14.0 1.3 Q14.7 1.3 14.7 2.0 L14.7 12.7 Q14.7 13.4 14.0 13.4 L1.0 13.4 Q0.3 13.4 0.3 12.7 Z" fill="#fec40a"/><path d="M0.3 0.9 Q0.3 0.2 1.0 0.2 L6.2 0.2 L7.2 1.3 L7.2 2.4 L0.3 2.4 Z" fill="#f0b800"/></svg></div>
<div class="t " style="left:23.70px;top:285.74px;font-size:14px;line-height:14px;color:#0e0e0e;letter-spacing:0.15px;">Local Sites</div>
<div class="t " style="left:218.20px;top:285.74px;font-size:14px;line-height:14px;color:#0e0e0e;letter-spacing:0.42px;">Directory</div>
<div class="t " style="left:327.00px;top:285.74px;font-size:14px;line-height:14px;color:#0e0e0e;letter-spacing:0.48px;">03/01/2019 11:1...</div>
<div class="b" style="left:0.30px;top:306.82px;line-height:0"><svg width="15" height="14" viewBox="0 0 15 14"><path d="M0.3 0.9 Q0.3 0.2 1.0 0.2 L6.2 0.2 L7.2 1.3 L14.0 1.3 Q14.7 1.3 14.7 2.0 L14.7 12.7 Q14.7 13.4 14.0 13.4 L1.0 13.4 Q0.3 13.4 0.3 12.7 Z" fill="#fec40a"/><path d="M0.3 0.9 Q0.3 0.2 1.0 0.2 L6.2 0.2 L7.2 1.3 L7.2 2.4 L0.3 2.4 Z" fill="#f0b800"/></svg></div>
<div class="t " style="left:23.70px;top:307.47px;font-size:14px;line-height:14px;color:#0e0e0e;letter-spacing:0.15px;">Movies</div>
<div class="t " style="left:218.20px;top:307.47px;font-size:14px;line-height:14px;color:#0e0e0e;letter-spacing:0.42px;">Directory</div>
<div class="t " style="left:327.00px;top:307.47px;font-size:14px;line-height:14px;color:#0e0e0e;letter-spacing:0.48px;">04/15/2019 11:1...</div>
<div class="b" style="left:0.30px;top:328.55px;line-height:0"><svg width="15" height="14" viewBox="0 0 15 14"><path d="M0.3 0.9 Q0.3 0.2 1.0 0.2 L6.2 0.2 L7.2 1.3 L14.0 1.3 Q14.7 1.3 14.7 2.0 L14.7 12.7 Q14.7 13.4 14.0 13.4 L1.0 13.4 Q0.3 13.4 0.3 12.7 Z" fill="#fec40a"/><path d="M0.3 0.9 Q0.3 0.2 1.0 0.2 L6.2 0.2 L7.2 1.3 L7.2 2.4 L0.3 2.4 Z" fill="#f0b800"/></svg></div>
<div class="t " style="left:23.70px;top:329.20px;font-size:14px;line-height:14px;color:#0e0e0e;letter-spacing:0.15px;">Music</div>
<div class="t " style="left:218.20px;top:329.20px;font-size:14px;line-height:14px;color:#0e0e0e;letter-spacing:0.42px;">Directory</div>
<div class="t " style="left:327.00px;top:329.20px;font-size:14px;line-height:14px;color:#0e0e0e;letter-spacing:0.48px;">03/07/2019 08:4...</div>
</div>
<div class="b" style="left:0.00px;top:695.20px;width:721.00px;height:23.80px;background:#ececec;border-top:1px solid #dadada;border-bottom:1px solid #d2d2d2;border-left:1px solid #d9d9d9;border-right:1px solid #d6d6d6"></div>
<div class="t " style="left:6.80px;top:697.84px;font-size:12px;line-height:12px;color:#111;letter-spacing:0.27px;">4 files and 18 directories. Total size: 17,507 bytes</div>
<div class="b" style="left:726.00px;top:274.20px;width:773.00px;height:1.00px;background:#d3d3d3"></div>
<div class="b" style="left:726.00px;top:275.00px;width:773.00px;height:420.50px;background:#fff;border-left:1px solid #d9d9d9;border-right:1px solid #d9d9d9"></div>
<div class="b" style="left:727.00px;top:275.60px;width:756.20px;height:18.60px;background:#f5f5f5;border-bottom:1px solid #e3e3e3"></div>
<div class="t " style="left:731.90px;top:279.99px;font-size:12.3px;line-height:12.3px;color:#1e1e1e;letter-spacing:0.12px;">Filename</div>
<div class="b" style="left:852.20px;top:278.60px;width:1.00px;height:12.60px;background:#d9d9d9"></div>
<div class="t" style="right:570.90px;top:279.99px;font-size:12.3px;line-height:12.3px;color:#1e1e1e;letter-spacing:0.1px;">Filesize</div>
<div class="b" style="left:933.80px;top:278.60px;width:1.00px;height:12.60px;background:#d9d9d9"></div>
<div class="t " style="left:938.60px;top:279.99px;font-size:12.3px;line-height:12.3px;color:#1e1e1e;letter-spacing:0.12px;">Filetype</div>
<div class="b" style="left:1020.80px;top:278.60px;width:1.00px;height:12.60px;background:#d9d9d9"></div>
<div class="t " style="left:1025.60px;top:279.99px;font-size:12.3px;line-height:12.3px;color:#1e1e1e;letter-spacing:0.12px;">Last modified</div>
<div class="b" style="left:1129.60px;top:278.60px;width:1.00px;height:12.60px;background:#d9d9d9"></div>
<div class="t " style="left:1134.40px;top:279.99px;font-size:12.3px;line-height:12.3px;color:#1e1e1e;letter-spacing:0.12px;">Permissions</div>
<div class="b" style="left:1217.00px;top:278.60px;width:1.00px;height:12.60px;background:#d9d9d9"></div>
<div class="t " style="left:1221.40px;top:279.99px;font-size:12.3px;line-height:12.3px;color:#1e1e1e;letter-spacing:0.12px;">Owner/Group</div>
<div class="b" style="left:1303.40px;top:278.60px;width:1.00px;height:12.60px;background:#d9d9d9"></div>
<div class="b" style="left:788.50px;top:279.40px;line-height:0"><svg width="15" height="10" viewBox="0 0 15 10"><path d="M1.2 8.6 L7.5 2.2 L13.8 8.6" fill="none" stroke="#585858" stroke-width="2.1"/></svg></div>
<div class="b" style="left:1483.20px;top:275.80px;width:15.50px;height:419.20px;background:#fafafa;border-left:1px solid #ededed"></div>
<div class="b" style="left:1487.00px;top:279.80px;width:8.70px;height:307.60px;background:#c2c2c2;border-radius:4.3px"></div>
<div class="b" style="left:727px;top:294.2px;width:756.2px;height:401.00px;overflow:hidden">
<div class="b" style="left:0.00px;top:44.50px;width:577.20px;height:64.10px;background:#2bc637"></div>
<div class="b" style="left:0.30px;top:4.30px;line-height:0"><svg width="15" height="14" viewBox="0 0 15 14"><path d="M0.3 0.9 Q0.3 0.2 1.0 0.2 L6.2 0.2 L7.2 1.3 L14.0 1.3 Q14.7 1.3 14.7 2.0 L14.7 12.7 Q14.7 13.4 14.0 13.4 L1.0 13.4 Q0.3 13.4 0.3 12.7 Z" fill="#fec40a"/><path d="M0.3 0.9 Q0.3 0.2 1.0 0.2 L6.2 0.2 L7.2 1.3 L7.2 2.4 L0.3 2.4 Z" fill="#f0b800"/></svg></div>
<div class="t " style="left:23.70px;top:4.75px;font-size:14px;line-height:14px;color:#0e0e0e;letter-spacing:0.45px;">..</div>
<div class="b" style="left:0.30px;top:26.07px;line-height:0"><svg width="15" height="14" viewBox="0 0 15 14"><path d="M0.3 0.9 Q0.3 0.2 1.0 0.2 L6.2 0.2 L7.2 1.3 L14.0 1.3 Q14.7 1.3 14.7 2.0 L14.7 12.7 Q14.7 13.4 14.0 13.4 L1.0 13.4 Q0.3 13.4 0.3 12.7 Z" fill="#fec40a"/><path d="M0.3 0.9 Q0.3 0.2 1.0 0.2 L6.2 0.2 L7.2 1.3 L7.2 2.4 L0.3 2.4 Z" fill="#f0b800"/></svg></div>
<div class="t " style="left:23.70px;top:26.51px;font-size:14px;line-height:14px;color:#0e0e0e;letter-spacing:0.45px;">wordpress</div>
<div class="t " style="left:207.30px;top:26.51px;font-size:14px;line-height:14px;color:#0e0e0e;letter-spacing:0.42px;">Directory</div>
<div class="t " style="left:294.00px;top:26.51px;font-size:14px;line-height:14px;color:#0e0e0e;letter-spacing:0.48px;">12/13/2018 1...</div>
<div class="t " style="left:403.50px;top:26.51px;font-size:14px;line-height:14px;color:#0e0e0e;letter-spacing:0.45px;">0755</div>
<div class="t " style="left:490.20px;top:26.51px;font-size:14px;line-height:14px;color:#0e0e0e;letter-spacing:0.65px;">7689673 ...</div>
<div class="b" style="left:0.30px;top:47.83px;line-height:0"><svg width="15" height="14" viewBox="0 0 15 14"><path d="M0.3 0.9 Q0.3 0.2 1.0 0.2 L6.2 0.2 L7.2 1.3 L14.0 1.3 Q14.7 1.3 14.7 2.0 L14.7 12.7 Q14.7 13.4 14.0 13.4 L1.0 13.4 Q0.3 13.4 0.3 12.7 Z" fill="#fec40a"/><path d="M0.3 0.9 Q0.3 0.2 1.0 0.2 L6.2 0.2 L7.2 1.3 L7.2 2.4 L0.3 2.4 Z" fill="#f0b800"/></svg></div>
<div class="t " style="left:23.70px;top:48.28px;font-size:14px;line-height:14px;color:#fff;letter-spacing:0.45px;-webkit-text-stroke:0.4px #fff;">wp-admin</div>
<div class="t " style="left:207.30px;top:48.28px;font-size:14px;line-height:14px;color:#fff;letter-spacing:0.42px;-webkit-text-stroke:0.4px #fff;">Directory</div>
<div class="t " style="left:294.00px;top:48.28px;font-size:14px;line-height:14px;color:#fff;letter-spacing:0.48px;-webkit-text-stroke:0.4px #fff;">10/31/2018 0...</div>
<div class="t " style="left:403.50px;top:48.28px;font-size:14px;line-height:14px;color:#fff;letter-spacing:0.45px;-webkit-text-stroke:0.4px #fff;">0755</div>
<div class="t " style="left:490.20px;top:48.28px;font-size:14px;line-height:14px;color:#fff;letter-spacing:0.65px;-webkit-text-stroke:0.4px #fff;">7689673 ...</div>
<div class="b" style="left:0.30px;top:69.60px;line-height:0"><svg width="15" height="14" viewBox="0 0 15 14"><path d="M0.3 0.9 Q0.3 0.2 1.0 0.2 L6.2 0.2 L7.2 1.3 L14.0 1.3 Q14.7 1.3 14.7 2.0 L14.7 12.7 Q14.7 13.4 14.0 13.4 L1.0 13.4 Q0.3 13.4 0.3 12.7 Z" fill="#fec40a"/><path d="M0.3 0.9 Q0.3 0.2 1.0 0.2 L6.2 0.2 L7.2 1.3 L7.2 2.4 L0.3 2.4 Z" fill="#f0b800"/></svg></div>
<div class="t " style="left:23.70px;top:70.04px;font-size:14px;line-height:14px;color:#fff;letter-spacing:0.45px;-webkit-text-stroke:0.4px #fff;">wp-content</div>
<div class="t " style="left:207.30px;top:70.04px;font-size:14px;line-height:14px;color:#fff;letter-spacing:0.42px;-webkit-text-stroke:0.4px #fff;">Directory</div>
<div class="t " style="left:294.00px;top:70.04px;font-size:14px;line-height:14px;color:#fff;letter-spacing:0.48px;-webkit-text-stroke:0.4px #fff;">10/31/2018 0...</div>
<div class="t " style="left:403.50px;top:70.04px;font-size:14px;line-height:14px;color:#fff;letter-spacing:0.45px;-webkit-text-stroke:0.4px #fff;">0755</div>
<div class="t " style="left:490.20px;top:70.04px;font-size:14px;line-height:14px;color:#fff;letter-spacing:0.65px;-webkit-text-stroke:0.4px #fff;">7689673 ...</div>
<div class="b" style="left:0.30px;top:91.36px;line-height:0"><svg width="15" height="14" viewBox="0 0 15 14"><path d="M0.3 0.9 Q0.3 0.2 1.0 0.2 L6.2 0.2 L7.2 1.3 L14.0 1.3 Q14.7 1.3 14.7 2.0 L14.7 12.7 Q14.7 13.4 14.0 13.4 L1.0 13.4 Q0.3 13.4 0.3 12.7 Z" fill="#fec40a"/><path d="M0.3 0.9 Q0.3 0.2 1.0 0.2 L6.2 0.2 L7.2 1.3 L7.2 2.4 L0.3 2.4 Z" fill="#f0b800"/></svg></div>
<div class="t " style="left:23.70px;top:91.81px;font-size:14px;line-height:14px;color:#fff;letter-spacing:0.45px;-webkit-text-stroke:0.4px #fff;">wp-includes</div>
<div class="t " style="left:207.30px;top:91.81px;font-size:14px;line-height:14px;color:#fff;letter-spacing:0.42px;-webkit-text-stroke:0.4px #fff;">Directory</div>
<div class="t " style="left:294.00px;top:91.81px;font-size:14px;line-height:14px;color:#fff;letter-spacing:0.48px;-webkit-text-stroke:0.4px #fff;">10/31/2018 0...</div>
<div class="t " style="left:403.50px;top:91.81px;font-size:14px;line-height:14px;color:#fff;letter-spacing:0.45px;-webkit-text-stroke:0.4px #fff;">0755</div>
<div class="t " style="left:490.20px;top:91.81px;font-size:14px;line-height:14px;color:#fff;letter-spacing:0.65px;-webkit-text-stroke:0.4px #fff;">7689673 ...</div>
<div class="b" style="left:2.50px;top:111.23px;line-height:0"><svg width="14" height="17" viewBox="0 0 14 17"><path d="M1 1 L9 1 L13 5 L13 16 L1 16 Z" fill="#fff" stroke="#d9d9d9" stroke-width="1"/><path d="M9 1 L9 5 L13 5" fill="none" stroke="#e3e3e3" stroke-width="1"/></svg></div>
<div class="t " style="left:23.70px;top:113.57px;font-size:14px;line-height:14px;color:#0e0e0e;letter-spacing:0.45px;">.htaccess</div>
<div class="t" style="right:557.70px;top:113.57px;font-size:14px;line-height:14px;color:#0e0e0e;letter-spacing:0.5px;">507</div>
<div class="t " style="left:207.30px;top:113.57px;font-size:14px;line-height:14px;color:#0e0e0e;letter-spacing:0.42px;">htaccess-file</div>
<div class="t " style="left:294.00px;top:113.57px;font-size:14px;line-height:14px;color:#0e0e0e;letter-spacing:0.48px;">10/31/2018 0...</div>
<div class="t " style="left:403.50px;top:113.57px;font-size:14px;line-height:14px;color:#0e0e0e;letter-spacing:0.45px;">0644</div>
<div class="t " style="left:490.20px;top:113.57px;font-size:14px;line-height:14px;color:#0e0e0e;letter-spacing:0.65px;">7689673 ...</div>
<div class="b" style="left:2.50px;top:132.99px;line-height:0"><svg width="14" height="17" viewBox="0 0 14 17"><path d="M1 1 L9 1 L13 5 L13 16 L1 16 Z" fill="#fff" stroke="#d9d9d9" stroke-width="1"/><path d="M9 1 L9 5 L13 5" fill="none" stroke="#e3e3e3" stroke-width="1"/></svg></div>
<div class="t " style="left:23.70px;top:135.34px;font-size:14px;line-height:14px;color:#0e0e0e;letter-spacing:0.45px;">.htaccess_o...</div>
<div class="t" style="right:557.70px;top:135.34px;font-size:14px;line-height:14px;color:#0e0e0e;letter-spacing:0.5px;">235</div>
<div class="t " style="left:207.30px;top:135.34px;font-size:14px;line-height:14px;color:#0e0e0e;letter-spacing:0.42px;">htaccess_o...</div>
<div class="t " style="left:294.00px;top:135.34px;font-size:14px;line-height:14px;color:#0e0e0e;letter-spacing:0.48px;">10/31/2018 0...</div>
<div class="t " style="left:403.50px;top:135.34px;font-size:14px;line-height:14px;color:#0e0e0e;letter-spacing:0.45px;">0644</div>
<div class="t " style="left:490.20px;top:135.34px;font-size:14px;line-height:14px;color:#0e0e0e;letter-spacing:0.65px;">7689673 ...</div>
<div class="b" style="left:2.50px;top:154.76px;line-height:0"><svg width="14" height="17" viewBox="0 0 14 17"><path d="M1 1 L9 1 L13 5 L13 16 L1 16 Z" fill="#fff" stroke="#d9d9d9" stroke-width="1"/><path d="M9 1 L9 5 L13 5" fill="none" stroke="#e3e3e3" stroke-width="1"/></svg></div>
<div class="t " style="left:23.70px;top:157.10px;font-size:14px;line-height:14px;color:#0e0e0e;letter-spacing:0.45px;">index.php</div>
<div class="t" style="right:557.70px;top:157.10px;font-size:14px;line-height:14px;color:#0e0e0e;letter-spacing:0.5px;">418</div>
<div class="t " style="left:207.30px;top:157.10px;font-size:14px;line-height:14px;color:#0e0e0e;letter-spacing:0.42px;">php-file</div>
<div class="t " style="left:294.00px;top:157.10px;font-size:14px;line-height:14px;color:#0e0e0e;letter-spacing:0.48px;">10/31/2018 0...</div>
<div class="t " style="left:403.50px;top:157.10px;font-size:14px;line-height:14px;color:#0e0e0e;letter-spacing:0.45px;">0644</div>
<div class="t " style="left:490.20px;top:157.10px;font-size:14px;line-height:14px;color:#0e0e0e;letter-spacing:0.65px;">7689673 ...</div>
<div class="b" style="left:2.50px;top:176.52px;line-height:0"><svg width="14" height="17" viewBox="0 0 14 17"><path d="M1 1 L9 1 L13 5 L13 16 L1 16 Z" fill="#fff" stroke="#d9d9d9" stroke-width="1"/><path d="M9 1 L9 5 L13 5" fill="none" stroke="#e3e3e3" stroke-width="1"/></svg></div>
<div class="t " style="left:23.70px;top:178.87px;font-size:14px;line-height:14px;color:#0e0e0e;letter-spacing:0.45px;">license.txt</div>
<div class="t" style="right:557.70px;top:178.87px;font-size:14px;line-height:14px;color:#0e0e0e;letter-spacing:0.5px;">19,935</div>
<div class="t " style="left:207.30px;top:178.87px;font-size:14px;line-height:14px;color:#0e0e0e;letter-spacing:0.42px;">txt-file</div>
<div class="t " style="left:294.00px;top:178.87px;font-size:14px;line-height:14px;color:#0e0e0e;letter-spacing:0.48px;">10/31/2018 0...</div>
<div class="t " style="left:403.50px;top:178.87px;font-size:14px;line-height:14px;color:#0e0e0e;letter-spacing:0.45px;">0644</div>
<div class="t " style="left:490.20px;top:178.87px;font-size:14px;line-height:14px;color:#0e0e0e;letter-spacing:0.65px;">7689673 ...</div>
<div class="b" style="left:2.50px;top:198.29px;line-height:0"><svg width="14" height="17" viewBox="0 0 14 17"><path d="M1 1 L9 1 L13 5 L13 16 L1 16 Z" fill="#fff" stroke="#d9d9d9" stroke-width="1"/><path d="M9 1 L9 5 L13 5" fill="none" stroke="#e3e3e3" stroke-width="1"/></svg></div>
<div class="b" style="left:4.1px;top:202.29px;line-height:0"><svg width="10" height="10" viewBox="0 0 10 10"><circle cx="5" cy="5" r="4.8" fill="#f5c518"/><path d="M5 5 L0.3 3.6 A4.8 4.8 0 0 0 4 9.7 Z" fill="#2fb83a"/><path d="M5 5 L0.4 3.4 A4.8 4.8 0 0 1 3.2 0.5 Z" fill="#8f9aa8"/><circle cx="5" cy="5" r="2.2" fill="#9aa6b3"/><circle cx="5.2" cy="5.2" r="1.4" fill="#1e88e5"/></svg></div>
<div class="t " style="left:23.70px;top:200.63px;font-size:14px;line-height:14px;color:#0e0e0e;letter-spacing:0.45px;">readme.html</div>
<div class="t" style="right:557.70px;top:200.63px;font-size:14px;line-height:14px;color:#0e0e0e;letter-spacing:0.5px;">7,415</div>
<div class="t " style="left:207.30px;top:200.63px;font-size:14px;line-height:14px;color:#0e0e0e;letter-spacing:0.42px;">html-file</div>
<div class="t " style="left:294.00px;top:200.63px;font-size:14px;line-height:14px;color:#0e0e0e;letter-spacing:0.48px;">10/31/2018 0...</div>
<div class="t " style="left:403.50px;top:200.63px;font-size:14px;line-height:14px;color:#0e0e0e;letter-spacing:0.45px;">0644</div>
<div class="t " style="left:490.20px;top:200.63px;font-size:14px;line-height:14px;color:#0e0e0e;letter-spacing:0.65px;">7689673 ...</div>
<div class="b" style="left:2.50px;top:220.05px;line-height:0"><svg width="14" height="17" viewBox="0 0 14 17"><path d="M1 1 L9 1 L13 5 L13 16 L1 16 Z" fill="#fff" stroke="#d9d9d9" stroke-width="1"/><path d="M9 1 L9 5 L13 5" fill="none" stroke="#e3e3e3" stroke-width="1"/></svg></div>
<div class="t " style="left:23.70px;top:222.40px;font-size:14px;line-height:14px;color:#0e0e0e;letter-spacing:0.45px;">wp-activate....</div>
<div class="t" style="right:557.70px;top:222.40px;font-size:14px;line-height:14px;color:#0e0e0e;letter-spacing:0.5px;">6,878</div>
<div class="t " style="left:207.30px;top:222.40px;font-size:14px;line-height:14px;color:#0e0e0e;letter-spacing:0.42px;">php-file</div>
<div class="t " style="left:294.00px;top:222.40px;font-size:14px;line-height:14px;color:#0e0e0e;letter-spacing:0.48px;">10/31/2018 0...</div>
<div class="t " style="left:403.50px;top:222.40px;font-size:14px;line-height:14px;color:#0e0e0e;letter-spacing:0.45px;">0644</div>
<div class="t " style="left:490.20px;top:222.40px;font-size:14px;line-height:14px;color:#0e0e0e;letter-spacing:0.65px;">7689673 ...</div>
<div class="b" style="left:2.50px;top:241.82px;line-height:0"><svg width="14" height="17" viewBox="0 0 14 17"><path d="M1 1 L9 1 L13 5 L13 16 L1 16 Z" fill="#fff" stroke="#d9d9d9" stroke-width="1"/><path d="M9 1 L9 5 L13 5" fill="none" stroke="#e3e3e3" stroke-width="1"/></svg></div>
<div class="t " style="left:23.70px;top:244.16px;font-size:14px;line-height:14px;color:#0e0e0e;letter-spacing:0.45px;">wp-blog-he...</div>
<div class="t" style="right:557.70px;top:244.16px;font-size:14px;line-height:14px;color:#0e0e0e;letter-spacing:0.5px;">369</div>
<div class="t " style="left:207.30px;top:244.16px;font-size:14px;line-height:14px;color:#0e0e0e;letter-spacing:0.42px;">php-file</div>
<div class="t " style="left:294.00px;top:244.16px;font-size:14px;line-height:14px;color:#0e0e0e;letter-spacing:0.48px;">10/31/2018 0...</div>
<div class="t " style="left:403.50px;top:244.16px;font-size:14px;line-height:14px;color:#0e0e0e;letter-spacing:0.45px;">0644</div>
<div class="t " style="left:490.20px;top:244.16px;font-size:14px;line-height:14px;color:#0e0e0e;letter-spacing:0.65px;">7689673 ...</div>
<div class="b" style="left:2.50px;top:263.58px;line-height:0"><svg width="14" height="17" viewBox="0 0 14 17"><path d="M1 1 L9 1 L13 5 L13 16 L1 16 Z" fill="#fff" stroke="#d9d9d9" stroke-width="1"/><path d="M9 1 L9 5 L13 5" fill="none" stroke="#e3e3e3" stroke-width="1"/></svg></div>
<div class="t " style="left:23.70px;top:265.93px;font-size:14px;line-height:14px;color:#0e0e0e;letter-spacing:0.45px;">wp-commen...</div>
<div class="t" style="right:557.70px;top:265.93px;font-size:14px;line-height:14px;color:#0e0e0e;letter-spacing:0.5px;">2,283</div>
<div class="t " style="left:207.30px;top:265.93px;font-size:14px;line-height:14px;color:#0e0e0e;letter-spacing:0.42px;">php-file</div>
<div class="t " style="left:294.00px;top:265.93px;font-size:14px;line-height:14px;color:#0e0e0e;letter-spacing:0.48px;">10/31/2018 0...</div>
<div class="t " style="left:403.50px;top:265.93px;font-size:14px;line-height:14px;color:#0e0e0e;letter-spacing:0.45px;">0644</div>
<div class="t " style="left:490.20px;top:265.93px;font-size:14px;line-height:14px;color:#0e0e0e;letter-spacing:0.65px;">7689673 ...</div>
<div class="b" style="left:2.50px;top:285.35px;line-height:0"><svg width="14" height="17" viewBox="0 0 14 17"><path d="M1 1 L9 1 L13 5 L13 16 L1 16 Z" fill="#fff" stroke="#d9d9d9" stroke-width="1"/><path d="M9 1 L9 5 L13 5" fill="none" stroke="#e3e3e3" stroke-width="1"/></svg></div>
<div class="t " style="left:23.70px;top:287.69px;font-size:14px;line-height:14px;color:#0e0e0e;letter-spacing:0.45px;">wp-config-s...</div>
<div class="t" style="right:557.70px;top:287.69px;font-size:14px;line-height:14px;color:#0e0e0e;letter-spacing:0.5px;">2,898</div>
<div class="t " style="left:207.30px;top:287.69px;font-size:14px;line-height:14px;color:#0e0e0e;letter-spacing:0.42px;">php-file</div>
<div class="t " style="left:294.00px;top:287.69px;font-size:14px;line-height:14px;color:#0e0e0e;letter-spacing:0.48px;">10/31/2018 0...</div>
<div class="t " style="left:403.50px;top:287.69px;font-size:14px;line-height:14px;color:#0e0e0e;letter-spacing:0.45px;">0644</div>
<div class="t " style="left:490.20px;top:287.69px;font-size:14px;line-height:14px;color:#0e0e0e;letter-spacing:0.65px;">7689673 ...</div>
<div class="b" style="left:2.50px;top:307.11px;line-height:0"><svg width="14" height="17" viewBox="0 0 14 17"><path d="M1 1 L9 1 L13 5 L13 16 L1 16 Z" fill="#fff" stroke="#d9d9d9" stroke-width="1"/><path d="M9 1 L9 5 L13 5" fill="none" stroke="#e3e3e3" stroke-width="1"/></svg></div>
<div class="t " style="left:23.70px;top:309.46px;font-size:14px;line-height:14px;color:#0e0e0e;letter-spacing:0.45px;">wp-config.p...</div>
<div class="t" style="right:557.70px;top:309.46px;font-size:14px;line-height:14px;color:#0e0e0e;letter-spacing:0.5px;">2,894</div>
<div class="t " style="left:207.30px;top:309.46px;font-size:14px;line-height:14px;color:#0e0e0e;letter-spacing:0.42px;">php-file</div>
<div class="t " style="left:294.00px;top:309.46px;font-size:14px;line-height:14px;color:#0e0e0e;letter-spacing:0.48px;">02/05/2019 1...</div>
<div class="t " style="left:403.50px;top:309.46px;font-size:14px;line-height:14px;color:#0e0e0e;letter-spacing:0.45px;">0644</div>
<div class="t " style="left:490.20px;top:309.46px;font-size:14px;line-height:14px;color:#0e0e0e;letter-spacing:0.65px;">7689673 ...</div>
<div class="b" style="left:2.50px;top:328.88px;line-height:0"><svg width="14" height="17" viewBox="0 0 14 17"><path d="M1 1 L9 1 L13 5 L13 16 L1 16 Z" fill="#fff" stroke="#d9d9d9" stroke-width="1"/><path d="M9 1 L9 5 L13 5" fill="none" stroke="#e3e3e3" stroke-width="1"/></svg></div>
<div class="t " style="left:23.70px;top:331.22px;font-size:14px;line-height:14px;color:#0e0e0e;letter-spacing:0.45px;">wp-cron.php</div>
<div class="t" style="right:557.70px;top:331.22px;font-size:14px;line-height:14px;color:#0e0e0e;letter-spacing:0.5px;">3,669</div>
<div class="t " style="left:207.30px;top:331.22px;font-size:14px;line-height:14px;color:#0e0e0e;letter-spacing:0.42px;">php-file</div>
<div class="t " style="left:294.00px;top:331.22px;font-size:14px;line-height:14px;color:#0e0e0e;letter-spacing:0.48px;">10/31/2018 0...</div>
<div class="t " style="left:403.50px;top:331.22px;font-size:14px;line-height:14px;color:#0e0e0e;letter-spacing:0.45px;">0644</div>
<div class="t " style="left:490.20px;top:331.22px;font-size:14px;line-height:14px;color:#0e0e0e;letter-spacing:0.65px;">7689673 ...</div>
<div class="b" style="left:2.50px;top:350.64px;line-height:0"><svg width="14" height="17" viewBox="0 0 14 17"><path d="M1 1 L9 1 L13 5 L13 16 L1 16 Z" fill="#fff" stroke="#d9d9d9" stroke-width="1"/><path d="M9 1 L9 5 L13 5" fill="none" stroke="#e3e3e3" stroke-width="1"/></svg></div>
<div class="t " style="left:23.70px;top:352.99px;font-size:14px;line-height:14px;color:#0e0e0e;letter-spacing:0.45px;">wp-links-op...</div>
<div class="t" style="right:557.70px;top:352.99px;font-size:14px;line-height:14px;color:#0e0e0e;letter-spacing:0.5px;">2,422</div>
<div class="t " style="left:207.30px;top:352.99px;font-size:14px;line-height:14px;color:#0e0e0e;letter-spacing:0.42px;">php-file</div>
<div class="t " style="left:294.00px;top:352.99px;font-size:14px;line-height:14px;color:#0e0e0e;letter-spacing:0.48px;">10/31/2018 0...</div>
<div class="t " style="left:403.50px;top:352.99px;font-size:14px;line-height:14px;color:#0e0e0e;letter-spacing:0.45px;">0644</div>
<div class="t " style="left:490.20px;top:352.99px;font-size:14px;line-height:14px;color:#0e0e0e;letter-spacing:0.65px;">7689673 ...</div>
<div class="b" style="left:2.50px;top:372.41px;line-height:0"><svg width="14" height="17" viewBox="0 0 14 17"><path d="M1 1 L9 1 L13 5 L13 16 L1 16 Z" fill="#fff" stroke="#d9d9d9" stroke-width="1"/><path d="M9 1 L9 5 L13 5" fill="none" stroke="#e3e3e3" stroke-width="1"/></svg></div>
<div class="t " style="left:23.70px;top:374.75px;font-size:14px;line-height:14px;color:#0e0e0e;letter-spacing:0.45px;">wp-load.php</div>
<div class="t" style="right:557.70px;top:374.75px;font-size:14px;line-height:14px;color:#0e0e0e;letter-spacing:0.5px;">3,306</div>
<div class="t " style="left:207.30px;top:374.75px;font-size:14px;line-height:14px;color:#0e0e0e;letter-spacing:0.42px;">php-file</div>
<div class="t " style="left:294.00px;top:374.75px;font-size:14px;line-height:14px;color:#0e0e0e;letter-spacing:0.48px;">10/31/2018 0...</div>
<div class="t " style="left:403.50px;top:374.75px;font-size:14px;line-height:14px;color:#0e0e0e;letter-spacing:0.45px;">0644</div>
<div class="t " style="left:490.20px;top:374.75px;font-size:14px;line-height:14px;color:#0e0e0e;letter-spacing:0.65px;">7689673 ...</div>
<div class="b" style="left:2.50px;top:394.17px;line-height:0"><svg width="14" height="17" viewBox="0 0 14 17"><path d="M1 1 L9 1 L13 5 L13 16 L1 16 Z" fill="#fff" stroke="#d9d9d9" stroke-width="1"/><path d="M9 1 L9 5 L13 5" fill="none" stroke="#e3e3e3" stroke-width="1"/></svg></div>
<div class="t " style="left:23.70px;top:396.52px;font-size:14px;line-height:14px;color:#0e0e0e;letter-spacing:0.45px;">wp-login.php</div>
<div class="t" style="right:557.70px;top:396.52px;font-size:14px;line-height:14px;color:#0e0e0e;letter-spacing:0.5px;">37,794</div>
<div class="t " style="left:207.30px;top:396.52px;font-size:14px;line-height:14px;color:#0e0e0e;letter-spacing:0.42px;">php-file</div>
<div class="t " style="left:294.00px;top:396.52px;font-size:14px;line-height:14px;color:#0e0e0e;letter-spacing:0.48px;">12/09/2018 1...</div>
<div class="t " style="left:403.50px;top:396.52px;font-size:14px;line-height:14px;color:#0e0e0e;letter-spacing:0.45px;">0644</div>
<div class="t " style="left:490.20px;top:396.52px;font-size:14px;line-height:14px;color:#0e0e0e;letter-spacing:0.65px;">7689673 ...</div>
</div>
<div class="b" style="left:726.00px;top:695.20px;width:773.00px;height:23.80px;background:#ececec;border-top:1px solid #dadada;border-bottom:1px solid #d2d2d2;border-left:1px solid #d9d9d9;border-right:1px solid #d6d6d6"></div>
<div class="t " style="left:733.00px;top:697.84px;font-size:12px;line-height:12px;color:#111;letter-spacing:0.38px;">Selected 3 directories.</div>
<div class="b" style="left:0.00px;top:719.00px;width:1500.00px;height:3.50px;background:#e6e6e6"></div>
<div class="b" style="left:0.00px;top:722.50px;width:1500.00px;height:1.20px;background:#d2d2d2"></div>
<div class="b" style="left:0.00px;top:723.50px;width:1500.00px;height:113.50px;background:#fff;border-left:1px solid #d9d9d9"></div>
<div class="b" style="left:1.00px;top:723.90px;width:1499.00px;height:18.40px;background:#f5f5f5;border-bottom:1px solid #e3e3e3"></div>
<div class="t " style="left:5.70px;top:728.19px;font-size:12.3px;line-height:12.3px;color:#1e1e1e;letter-spacing:0.12px;">Server/Local file</div>
<div class="b" style="left:197.70px;top:726.90px;width:1.00px;height:12.40px;background:#d9d9d9"></div>
<div class="t " style="left:204.00px;top:728.19px;font-size:12.3px;line-height:12.3px;color:#1e1e1e;letter-spacing:0.12px;">Direction</div>
<div class="b" style="left:262.70px;top:726.90px;width:1.00px;height:12.40px;background:#d9d9d9"></div>
<div class="t " style="left:266.70px;top:728.19px;font-size:12.3px;line-height:12.3px;color:#1e1e1e;letter-spacing:0.12px;">Remote file</div>
<div class="b" style="left:458.30px;top:726.90px;width:1.00px;height:12.40px;background:#d9d9d9"></div>
<div class="t" style="right:959.40px;top:728.19px;font-size:12.3px;line-height:12.3px;color:#1e1e1e;letter-spacing:0.1px;">Size</div>
<div class="b" style="left:545.00px;top:726.90px;width:1.00px;height:12.40px;background:#d9d9d9"></div>
<div class="t " style="left:550.00px;top:728.19px;font-size:12.3px;line-height:12.3px;color:#1e1e1e;letter-spacing:0.12px;">Priority</div>
<div class="b" style="left:610.00px;top:726.90px;width:1.00px;height:12.40px;background:#d9d9d9"></div>
<div class="t " style="left:615.00px;top:728.19px;font-size:12.3px;line-height:12.3px;color:#1e1e1e;letter-spacing:0.12px;">Status</div>
<div class="b" style="left:774.00px;top:726.90px;width:1.00px;height:12.40px;background:#d9d9d9"></div>
<div class="b" style="left:1497.50px;top:726.90px;width:1.00px;height:12.40px;background:#d9d9d9"></div>
<div class="b" style="left:0.00px;top:835.80px;width:1500.00px;height:1.20px;background:#b9b9b9"></div>
<div class="b" style="left:860px;top:357px;width:229.8px;height:253.5px;border-radius:5px;box-shadow:0 0 0 0.5px rgba(0,0,0,0.10),0 5px 20px rgba(0,0,0,0.2);overflow:hidden;background:linear-gradient(#b3e9ab 0px,#bdeab6 25px,#c6ebc0 50px,#d3ead0 73px,#dfe9dd 90px,#e7e9e6 120px,#eaeaea 160px,#ebebeb 253px)"></div>
<div class="b" style="left:860.00px;top:431.00px;width:229.80px;height:1.00px;background:rgba(0,0,0,0.09)"></div>
<div class="b" style="left:860.00px;top:522.00px;width:229.80px;height:1.00px;background:rgba(0,0,0,0.09)"></div>
<div class="b" style="left:860.00px;top:587.50px;width:229.80px;height:19.40px;background:#76c567"></div>
<div class="b" style="left:885px;top:363px;line-height:0"><svg width="13" height="16" viewBox="0 0 13 16"><rect x="3" y="0.2" width="6.6" height="10.5" fill="#2f86d8"/><path d="M1 10 L11.9 10 L6.3 15.9 Z" fill="#2f86d8"/></svg></div>
<div class="b" style="left:884px;top:384.8px;line-height:0"><svg width="16" height="16" viewBox="0 0 16 16"><rect x="2.9" y="0" width="5.2" height="6" fill="#2f86d8"/><path d="M0 5.3 L11 5.3 L5.5 11.2 Z" fill="#2f86d8"/><path d="M10.6 8.4 L10.6 15.4 M7 11.9 L14.3 11.9" stroke="#1fc42a" stroke-width="2.2"/></svg></div>
<div class="t " style="left:905.00px;top:365.45px;font-size:14px;line-height:14px;color:#1d1d1d;letter-spacing:0.35px;">Download</div>
<div class="t " style="left:905.00px;top:387.15px;font-size:14px;line-height:14px;color:#1d1d1d;letter-spacing:0.35px;">Add files to queue</div>
<div class="t " style="left:883.30px;top:406.75px;font-size:14px;line-height:14px;color:#a9a9a9;letter-spacing:0.35px;">View/Edit</div>
<div class="t " style="left:883.30px;top:439.25px;font-size:14px;line-height:14px;color:#1d1d1d;letter-spacing:0.35px;">Create directory</div>
<div class="t " style="left:883.30px;top:458.75px;font-size:14px;line-height:14px;color:#1d1d1d;letter-spacing:0.35px;">Create directory and enter it</div>
<div class="t " style="left:883.30px;top:478.85px;font-size:14px;line-height:14px;color:#1d1d1d;letter-spacing:0.35px;">Create new file</div>
<div class="t " style="left:883.30px;top:498.05px;font-size:14px;line-height:14px;color:#1d1d1d;letter-spacing:0.35px;">Refresh</div>
<div class="t " style="left:883.30px;top:531.15px;font-size:14px;line-height:14px;color:#1d1d1d;letter-spacing:0.35px;">Delete</div>
<div class="t " style="left:883.30px;top:550.45px;font-size:14px;line-height:14px;color:#a9a9a9;letter-spacing:0.35px;">Rename</div>
<div class="t " style="left:883.30px;top:570.25px;font-size:14px;line-height:14px;color:#1d1d1d;letter-spacing:0.35px;">Copy URL(s) to clipboard</div>
<div class="t " style="left:883.30px;top:589.95px;font-size:14px;line-height:14px;color:#fdfdfd;letter-spacing:0.35px;-webkit-text-stroke:0.3px #fff;">File permissions...</div>
</body></html>
